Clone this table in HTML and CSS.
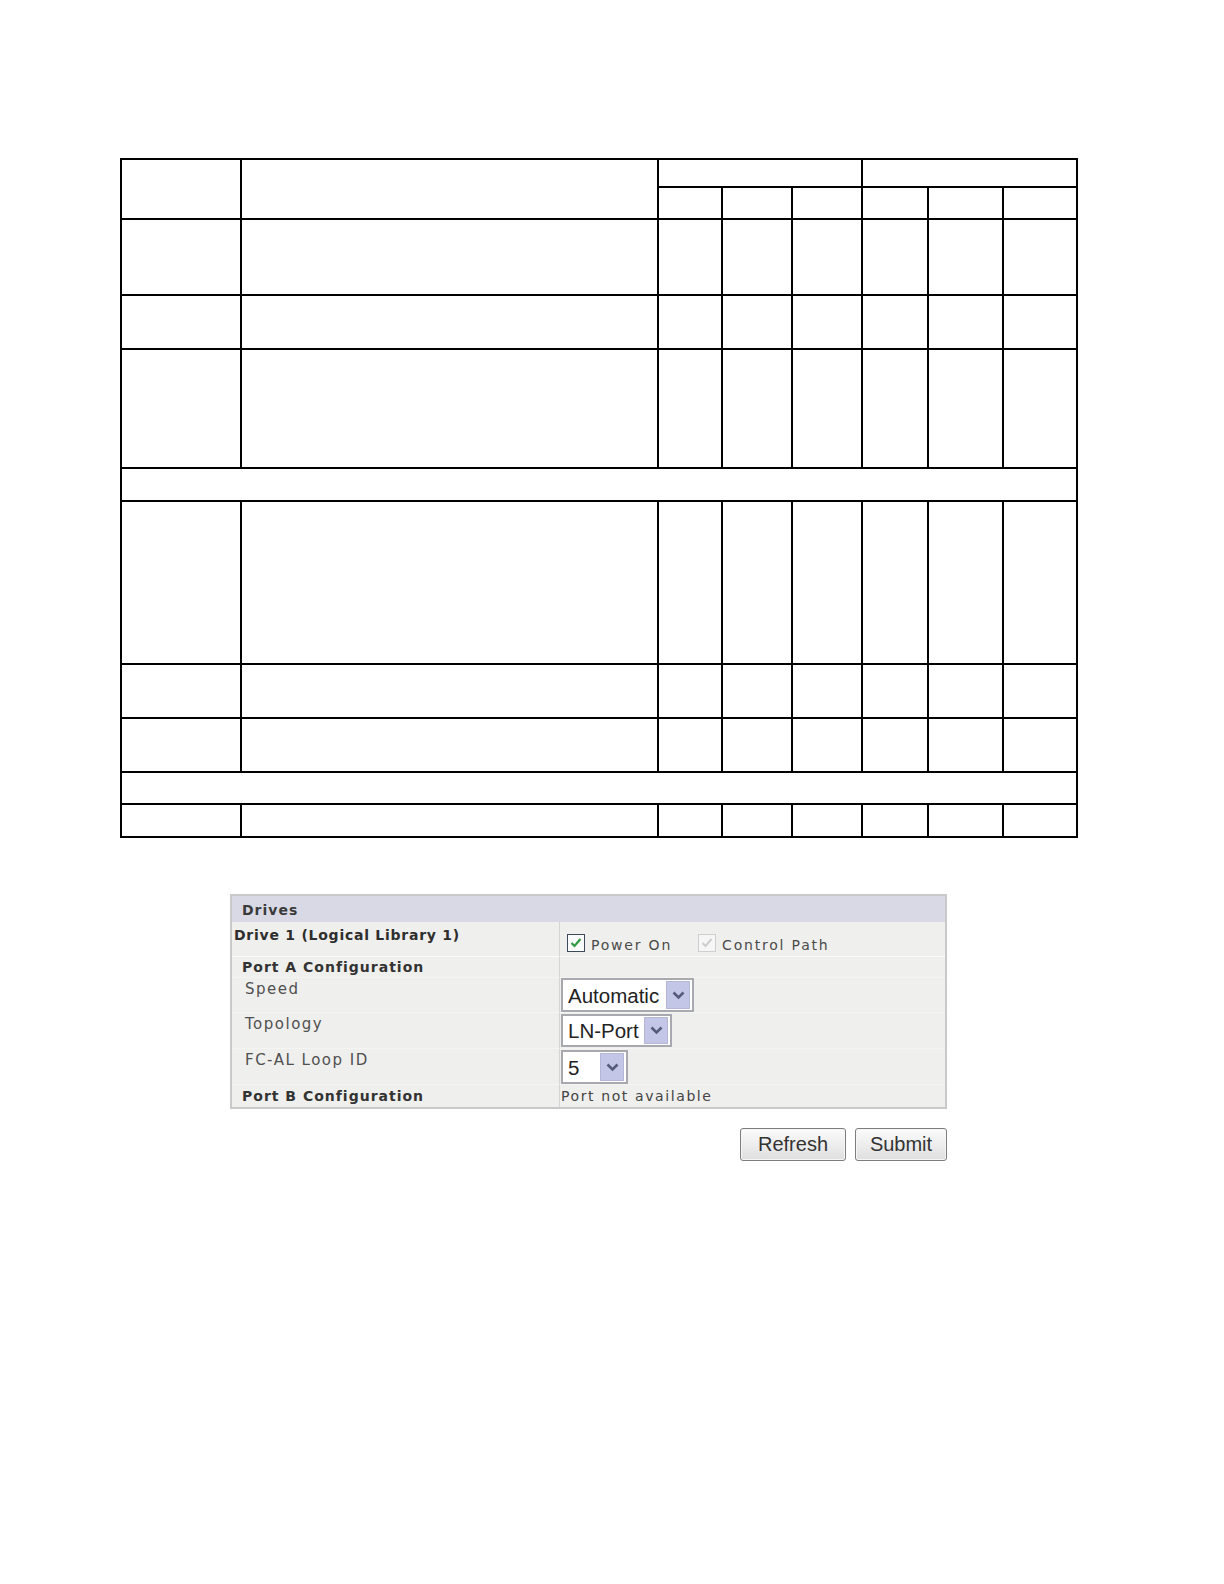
FILE: index.html
```html
<!DOCTYPE html>
<html>
<head>
<meta charset="utf-8">
<link rel="stylesheet" href="styles.css">
</head>
<body>
<main class="page">
  <table class="matrix">
    <colgroup>
      <col class="c1"><col class="c2"><col class="c3"><col class="c4"><col class="c5"><col class="c6"><col class="c7"><col class="c8">
    </colgroup>
    <tr class="h1"><td rowspan="2"></td><td rowspan="2"></td><td colspan="3"></td><td colspan="3"></td></tr>
    <tr class="h2"><td></td><td></td><td></td><td></td><td></td><td></td></tr>
    <tr class="r74"><td></td><td></td><td></td><td></td><td></td><td></td><td></td><td></td></tr>
    <tr class="r52"><td></td><td></td><td></td><td></td><td></td><td></td><td></td><td></td></tr>
    <tr class="r117"><td></td><td></td><td></td><td></td><td></td><td></td><td></td><td></td></tr>
    <tr class="r31"><td colspan="8"></td></tr>
    <tr class="r161"><td></td><td></td><td></td><td></td><td></td><td></td><td></td><td></td></tr>
    <tr class="r52"><td></td><td></td><td></td><td></td><td></td><td></td><td></td><td></td></tr>
    <tr class="r52"><td></td><td></td><td></td><td></td><td></td><td></td><td></td><td></td></tr>
    <tr class="r30"><td colspan="8"></td></tr>
    <tr class="r31"><td></td><td></td><td></td><td></td><td></td><td></td><td></td><td></td></tr>
  </table>

  <section class="form-area">
    <div class="panel">
      <div class="panel-head">Drives</div>
      <div class="panel-body">
        <div class="lbl drive row1">Drive 1 (Logical Library 1)</div>
        <div class="val row1 checks">
          <span class="check">
            <svg class="box" width="18" height="18" viewBox="0 0 18 18"><rect x="0.5" y="0.5" width="17" height="17" fill="#fbfbfb" stroke="#3c4a5c"/><path d="M4.5 9 L7.5 12 L13.5 5" fill="none" stroke="#2f9a3e" stroke-width="2.2"/></svg>
            <span>Power On</span>
          </span>
          <span class="check disabled">
            <svg class="box" width="18" height="18" viewBox="0 0 18 18"><rect x="0.5" y="0.5" width="17" height="17" fill="#f6f6f6" stroke="#cfcfcf"/><path d="M4.5 9 L7.5 12 L13.5 5" fill="none" stroke="#cdcdcd" stroke-width="2"/></svg>
            <span>Control Path</span>
          </span>
        </div>

        <div class="lbl sect row2">Port A Configuration</div>
        <div class="val row2"></div>

        <div class="lbl sub row3">Speed</div>
        <div class="val row3">
          <div class="select w-auto"><span class="sel-text">Automatic</span><span class="sel-btn"><svg width="13" height="9" viewBox="0 0 13 9"><path d="M1.5 1.5 L6.5 6.5 L11.5 1.5" fill="none" stroke="#555b7a" stroke-width="2.6"/></svg></span></div>
        </div>

        <div class="lbl sub row4">Topology</div>
        <div class="val row4">
          <div class="select w-ln"><span class="sel-text">LN-Port</span><span class="sel-btn"><svg width="13" height="9" viewBox="0 0 13 9"><path d="M1.5 1.5 L6.5 6.5 L11.5 1.5" fill="none" stroke="#555b7a" stroke-width="2.6"/></svg></span></div>
        </div>

        <div class="lbl sub row5">FC-AL Loop ID</div>
        <div class="val row5">
          <div class="select w-five"><span class="sel-text">5</span><span class="sel-btn"><svg width="13" height="9" viewBox="0 0 13 9"><path d="M1.5 1.5 L6.5 6.5 L11.5 1.5" fill="none" stroke="#555b7a" stroke-width="2.6"/></svg></span></div>
        </div>

        <div class="lbl sect row6">Port B Configuration</div>
        <div class="val row6 note">Port not available</div>
      </div>
    </div>
    <div class="actions">
      <button class="btn btn-refresh" type="button">Refresh</button>
      <button class="btn btn-submit" type="button">Submit</button>
    </div>
  </section>
</main>
</body>
</html>
```

FILE: styles.css
```css
html, body {
  margin: 0;
  padding: 0;
  background: #ffffff;
}

.page {
  padding: 158px 0 0 120px;
}

/* ---------- Empty grid table ---------- */
.matrix {
  table-layout: fixed;
  border-collapse: separate;
  border-spacing: 2px;
  background: #000000;
  width: 958px;
}
.matrix td {
  background: #ffffff;
  padding: 0;
}
.matrix .c1 { width: 118px; }
.matrix .c2 { width: 415px; }
.matrix .c3 { width: 62px; }
.matrix .c4 { width: 68px; }
.matrix .c5 { width: 68px; }
.matrix .c6 { width: 64px; }
.matrix .c7 { width: 73px; }
.matrix .c8 { width: 72px; }

.matrix .h1 { height: 26px; }
.matrix .h2 { height: 30px; }
.matrix .r74 { height: 74px; }
.matrix .r52 { height: 52px; }
.matrix .r117 { height: 117px; }
.matrix .r31 { height: 31px; }
.matrix .r30 { height: 30px; }
.matrix .r161 { height: 161px; }

/* ---------- Drives form ---------- */
.form-area {
  margin: 56px 0 0 110px;
  width: 717px;
}

.panel {
  border: 2px solid #c9c9c9;
  background: #efefed;
  font-family: "DejaVu Sans", Verdana, sans-serif;
  font-size: 14px;
  line-height: 17px;
  color: #444;
}

.panel-head {
  height: 26px;
  box-sizing: border-box;
  background: #d9d9e6;
  padding: 6px 0 0 10px;
  font-weight: bold;
  letter-spacing: 1px;
  color: #3a3a3a;
}

.panel-body {
  display: grid;
  grid-template-columns: 327px 1fr;
  grid-template-rows: 35px 21px 35px 36px 36px 22px;
}

.lbl, .val {
  box-sizing: border-box;
  letter-spacing: 1px;
}
.val {
  border-left: 1px solid #d4d4d4;
  padding-left: 1px;
}
.lbl.row1, .val.row1 {
  border-bottom: 1px solid #fbfbfb;
}
.lbl.row2, .lbl.row3, .lbl.row4, .lbl.row5,
.val.row2, .val.row3, .val.row4, .val.row5 {
  border-bottom: 1px solid #f4f4f2;
}

.drive {
  font-weight: bold;
  color: #2e2e2e;
  padding: 5px 0 0 2px;
  letter-spacing: 0.75px;
}
.sect {
  font-weight: bold;
  color: #333;
  padding: 3px 0 0 10px;
}
.lbl.row2 { padding-top: 2px; }
.sub {
  padding: 3px 0 0 13px;
  color: #505050;
  font-size: 15px;
  letter-spacing: 1.5px;
}

.checks {
  display: flex;
  padding: 12px 0 0 7px;
  align-items: flex-start;
}
.check {
  display: flex;
  align-items: center;
  gap: 6px;
  color: #4a4a4a;
  letter-spacing: 1.8px;
  height: 18px;
}
.check span {
  position: relative;
  top: 2px;
}
.check.disabled {
  margin-left: 26px;
}
.check .box { flex: none; display: block; }

.val.row3 { padding-top: 0; }
.val.row4, .val.row5 { padding-top: 1px; }

.select {
  box-sizing: border-box;
  display: flex;
  align-items: center;
  justify-content: space-between;
  height: 34px;
  border: 2px solid #a8a8b0;
  background: #ffffff;
  padding: 0 2px 0 5px;
  font-family: "Liberation Sans", Arial, sans-serif;
  font-size: 20.5px;
  letter-spacing: 0;
  color: #222;
}
.w-auto { width: 133px; }
.w-ln { width: 111px; height: 33px; }
.w-five { width: 67px; }

.sel-btn {
  box-sizing: border-box;
  width: 24px;
  height: 28px;
  background: #c3c6e6;
  border: 1px solid #b4b7d6;
  display: flex;
  align-items: center;
  justify-content: center;
}
.w-ln .sel-btn { height: 27px; }
.sel-btn svg { display: block; }

.note {
  letter-spacing: 1.6px;
  color: #444;
  padding: 3px 0 0 1px;
}

.actions {
  display: flex;
  justify-content: flex-end;
  gap: 9px;
  margin-top: 19px;
}
.btn {
  box-sizing: border-box;
  height: 33px;
  border: 1px solid #7d7d7d;
  border-radius: 3px;
  background: linear-gradient(#fbfbfb, #ececec 55%, #dedede);
  box-shadow: inset 0 0 0 1px #f6f6f6;
  font-family: "Liberation Sans", Arial, sans-serif;
  font-size: 20px;
  color: #333;
  padding: 0;
}
.btn-refresh { width: 106px; }
.btn-submit { width: 92px; }
```
